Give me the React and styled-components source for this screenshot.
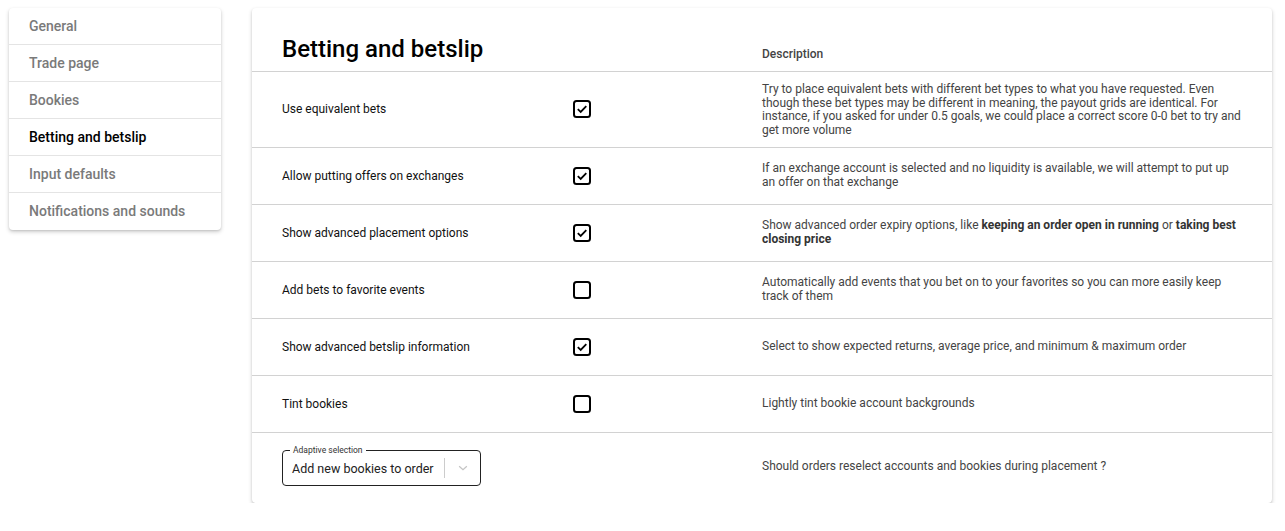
import React from "react";
import styled, { createGlobalStyle } from "styled-components";

const GlobalStyle = createGlobalStyle`
  body {
    margin: 0;
    background: #ffffff;
    font-family: Roboto, "Liberation Sans", Arial, sans-serif;
    color: #000;
  }
`;

const Page = styled.div`
  display: flex;
  align-items: flex-start;
  gap: 31px;
  padding: 8px 13px 0 9px;
`;

const Card = styled.div`
  background: #fff;
  border-radius: 4px;
  box-shadow: 0 2px 4px rgba(0, 0, 0, 0.18), 0 1px 2px rgba(0, 0, 0, 0.1);
`;

const Sidebar = styled(Card)`
  width: 212px;
  flex-shrink: 0;
`;

const NavItem = styled.div`
  height: 37px;
  display: flex;
  align-items: center;
  padding: 0 20px;
  font-size: 14px;
  font-weight: 500;
  color: ${p => (p.active ? "#000" : "#7a7a7a")};
  border-bottom: 1px solid ${p => (p.last ? "transparent" : "#e4e4e4")};
  box-sizing: border-box;
`;

const Main = styled(Card)`
  flex: 1;
`;

const Row = styled.div`
  display: grid;
  grid-template-columns: 291px 189px 1fr;
  align-items: center;
  padding: 0 30px;
  min-height: 56px;
  border-bottom: 1px solid ${p => (p.last ? "transparent" : "#d2d2d2")};
`;

const HeaderRow = styled(Row)`
  min-height: 0;
  height: 64px;
  align-items: end;
  padding-bottom: 9px;
  box-sizing: border-box;
`;

const Title = styled.h1`
  margin: 0;
  font-size: 24px;
  font-weight: 500;
  line-height: 28px;
  margin-bottom: -1px;
`;

const ColHead = styled.div`
  grid-column: 3;
  font-size: 12px;
  font-weight: 500;
  color: #444;
  margin-bottom: 1px;
`;

const Label = styled.div`
  font-size: 12px;
  color: #111;
`;

const Desc = styled.div`
  font-size: 12px;
  line-height: 13.7px;
  color: #444;
  padding: ${p => (p.tall ? "11px 0 9px" : "14px 0")};

  b {
    font-weight: 700;
    color: #333;
  }
`;

const BoxCell = styled.div`
  display: flex;
  align-items: center;
  margin-left: -1px;
`;

const Check = ({ checked }) => (
  <svg width="20" height="20" viewBox="0 0 20 20">
    <rect x="2" y="2" width="16" height="16" rx="2.5" fill="none" stroke="#000" strokeWidth="2" />
    {checked && <path d="M5.8 10.2 L8.7 13 L14.3 7.2" fill="none" stroke="#000" strokeWidth="1.8" />}
  </svg>
);

const SelectRow = styled(Row)`
  min-height: 69px;
`;

const SelectBox = styled.div`
  position: relative;
  width: 199px;
  height: 36px;
  border: 1px solid #222;
  border-radius: 4px;
  box-sizing: border-box;
  display: flex;
  align-items: center;
  padding-left: 9px;
  margin-top: 2px;
`;

const SelectLegend = styled.span`
  position: absolute;
  top: -6px;
  left: 7px;
  padding: 0 3px;
  background: #fff;
  font-size: 8.5px;
  line-height: 10px;
  color: #333;
`;

const SelectValue = styled.span`
  flex: 1;
  font-size: 12.5px;
  color: #222;
`;

const Separator = styled.span`
  width: 1px;
  height: 20px;
  background: #ccc;
`;

const Chevron = styled.span`
  width: 35px;
  display: flex;
  justify-content: center;
`;

const navItems = [
  "General",
  "Trade page",
  "Bookies",
  "Betting and betslip",
  "Input defaults",
  "Notifications and sounds",
];

const rows = [
  {
    label: "Use equivalent bets",
    checked: true,
    tall: true,
    desc: "Try to place equivalent bets with different bet types to what you have requested. Even though these bet types may be different in meaning, the payout grids are identical. For instance, if you asked for under 0.5 goals, we could place a correct score 0-0 bet to try and get more volume",
  },
  {
    label: "Allow putting offers on exchanges",
    checked: true,
    desc: "If an exchange account is selected and no liquidity is available, we will attempt to put up an offer on that exchange",
  },
  {
    label: "Show advanced placement options",
    checked: true,
    desc: (
      <>
        Show advanced order expiry options, like <b>keeping an order open in running</b> or{" "}
        <b>taking best closing price</b>
      </>
    ),
  },
  {
    label: "Add bets to favorite events",
    checked: false,
    desc: "Automatically add events that you bet on to your favorites so you can more easily keep track of them",
  },
  {
    label: "Show advanced betslip information",
    checked: true,
    desc: "Select to show expected returns, average price, and minimum & maximum order",
  },
  {
    label: "Tint bookies",
    checked: false,
    desc: "Lightly tint bookie account backgrounds",
  },
];

const App = () => (
  <>
    <GlobalStyle />
    <Page>
      <Sidebar>
        {navItems.map((item, i) => (
          <NavItem key={item} active={item === "Betting and betslip"} last={i === navItems.length - 1}>
            {item}
          </NavItem>
        ))}
      </Sidebar>
      <Main>
        <HeaderRow>
          <Title>Betting and betslip</Title>
          <ColHead>Description</ColHead>
        </HeaderRow>
        {rows.map(row => (
          <Row key={row.label}>
            <Label>{row.label}</Label>
            <BoxCell>
              <Check checked={row.checked} />
            </BoxCell>
            <Desc tall={row.tall}>{row.desc}</Desc>
          </Row>
        ))}
        <SelectRow last>
          <SelectBox>
            <SelectLegend>Adaptive selection</SelectLegend>
            <SelectValue>Add new bookies to order</SelectValue>
            <Separator />
            <Chevron>
              <svg width="14" height="14" viewBox="0 0 20 20">
                <path d="M4.5 7.5 L10 12.5 L15.5 7.5" fill="none" stroke="#c4c4c4" strokeWidth="1.8" />
              </svg>
            </Chevron>
          </SelectBox>
          <span />
          <Desc>Should orders reselect accounts and bookies during placement ?</Desc>
        </SelectRow>
      </Main>
    </Page>
  </>
);

export default App;
